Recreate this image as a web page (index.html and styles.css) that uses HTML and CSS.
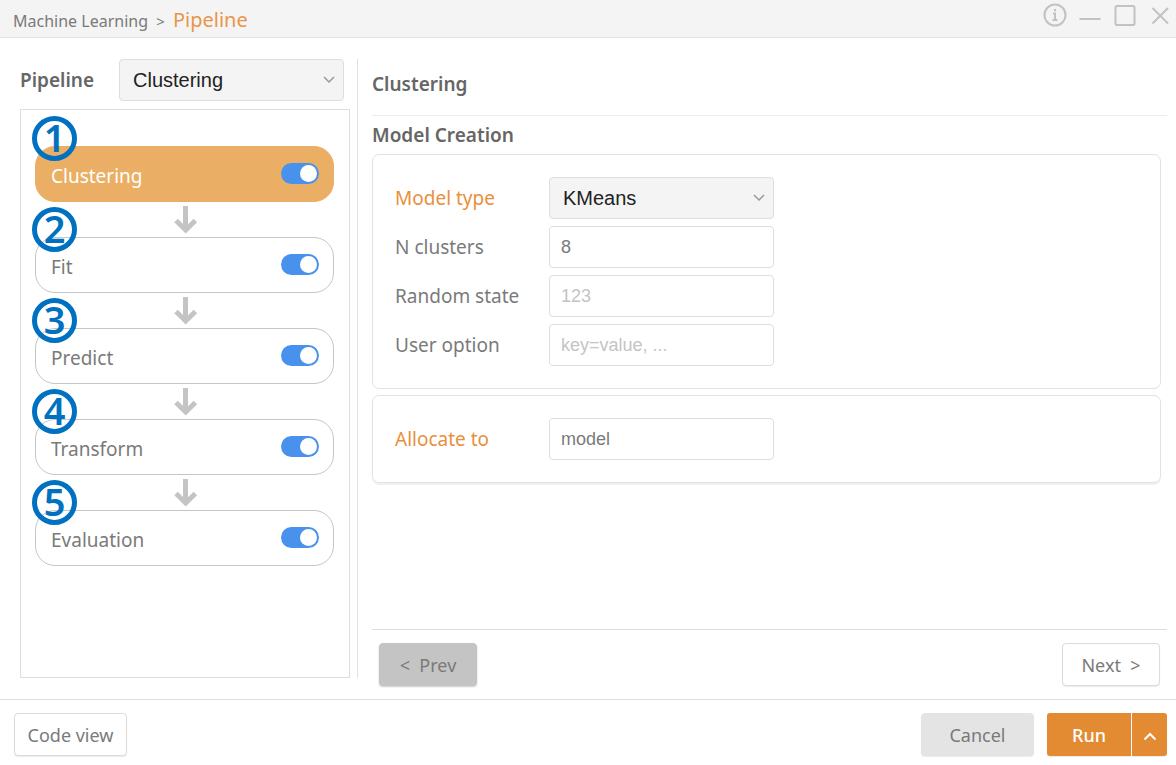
FILE: index.html
```html
<!DOCTYPE html>
<html lang="en">
<head>
<meta charset="utf-8">
<title>Machine Learning - Pipeline</title>
<link rel="stylesheet" href="styles.css">
</head>
<body>
<div class="window">
  <header class="titlebar">
    <h1 class="crumbs">Machine Learning <span class="crumb-sep">&gt;</span> <span class="crumb-current">Pipeline</span></h1>
    <div class="window-controls">
      <button class="icon-button" type="button" aria-label="Information">
        <svg width="24" height="24" viewBox="0 0 24 24"><circle cx="12" cy="12" r="10.5"/><path d="M10 10.5h2v6M9.500 17h5M12 6v2.200"/></svg>
      </button>
      <button class="icon-button" type="button" aria-label="Minimize">
        <svg width="24" height="24" viewBox="0 0 24 24"><path d="M1.500 16h21"/></svg>
      </button>
      <button class="icon-button" type="button" aria-label="Maximize">
        <svg width="24" height="24" viewBox="0 0 24 24"><rect x="2.500" y="3" width="19" height="19" rx="1.500"/></svg>
      </button>
      <button class="icon-button" type="button" aria-label="Close">
        <svg width="24" height="24" viewBox="0 0 24 24"><path d="M4.500 5L20 20.500M20 5L4.500 20.500"/></svg>
      </button>
    </div>
  </header>

  <main class="content">
    <section class="sidebar">
      <div class="template">
        <label class="template-label" for="template">Pipeline</label>
        <select class="field select" id="template"><option>Clustering</option></select>
      </div>
      <ol class="steps">
        <li class="step step-active"><span class="badge">1</span><label for="s1">Clustering</label><input class="toggle" type="checkbox" id="s1" checked></li>
        <li class="step"><span class="badge">2</span><label for="s2">Fit</label><input class="toggle" type="checkbox" id="s2" checked>
          <svg class="arrow" width="24" height="28" viewBox="0 0 24 28"><path d="M11.500 0v24M2 14.500l9.700 9.500 9.700-9.500"/></svg></li>
        <li class="step"><span class="badge">3</span><label for="s3">Predict</label><input class="toggle" type="checkbox" id="s3" checked>
          <svg class="arrow" width="24" height="28" viewBox="0 0 24 28"><path d="M11.500 0v24M2 14.500l9.700 9.500 9.700-9.500"/></svg></li>
        <li class="step"><span class="badge">4</span><label for="s4">Transform</label><input class="toggle" type="checkbox" id="s4" checked>
          <svg class="arrow" width="24" height="28" viewBox="0 0 24 28"><path d="M11.500 0v24M2 14.500l9.700 9.500 9.700-9.500"/></svg></li>
        <li class="step"><span class="badge">5</span><label for="s5">Evaluation</label><input class="toggle" type="checkbox" id="s5" checked>
          <svg class="arrow" width="24" height="28" viewBox="0 0 24 28"><path d="M11.500 0v24M2 14.500l9.700 9.500 9.700-9.500"/></svg></li>
      </ol>
    </section>

    <section class="detail">
      <h2 class="detail-title">Clustering</h2>
      <div class="detail-body">
        <h3 class="group-title">Model Creation</h3>
        <div class="card">
          <label class="required" for="type">Model type</label>
          <select class="field select" id="type"><option>KMeans</option></select>
          <label for="clusters">N clusters</label>
          <input class="field" id="clusters" type="text" value="8">
          <label for="state">Random state</label>
          <input class="field" id="state" type="text" placeholder="123">
          <label for="option">User option</label>
          <input class="field" id="option" type="text" placeholder="key=value, ...">
        </div>
        <div class="card card-last">
          <label class="required" for="allocate">Allocate to</label>
          <input class="field" id="allocate" type="text" value="model">
        </div>
      </div>
      <div class="pager">
        <button class="button button-prev" type="button">&lt;&nbsp; Prev</button>
        <button class="button button-next" type="button">Next&nbsp; &gt;</button>
      </div>
    </section>
  </main>

  <footer class="actions">
    <button class="button button-code" type="button">Code view</button>
    <button class="button button-cancel" type="button">Cancel</button>
    <div class="run-group">
      <button class="button button-run" type="button">Run</button>
      <button class="button button-more" type="button" aria-label="More run options">
        <svg width="14" height="10" viewBox="0 0 14 10"><path d="M1.500 7.500L7 2l5.500 5.500"/></svg>
      </button>
    </div>
  </footer>
</div>
</body>
</html>
```
FILE: styles.css
```css
* { box-sizing: border-box; }

body {
  margin: 0;
  color: #7a7a7a;
  background: #fff;
  font-family: "Noto Sans", "Open Sans", sans-serif;
  font-size: 19px;
  line-height: 26px;
}

h1, h2, h3 { margin: 0; }

button, input, select { font: inherit; color: inherit; }

.window {
  display: flex;
  flex-direction: column;
  min-height: 100vh;
}

.titlebar {
  display: flex;
  align-items: center;
  justify-content: space-between;
  height: 38px;
  padding: 0 4px 0 13px;
  background: #f4f4f4;
  border-bottom: 1px solid #e0e0e0;
}

.crumbs {
  padding-top: 4px;
  font-size: 16px;
  font-weight: 400;
}

.crumb-sep {
  margin: 0 4px;
  font-size: 15px;
}

.crumb-current {
  color: #e8964a;
  font-size: 20px;
}

.window-controls {
  display: flex;
  gap: 11px;
  padding-bottom: 7px;
}

.icon-button {
  display: flex;
  padding: 0;
  border: 0;
  background: none;
}

.icon-button svg {
  fill: none;
  stroke: #c2c2c2;
  stroke-width: 2;
}

.content {
  display: flex;
  flex: 1;
  gap: 14px;
  padding: 21px 9px 13px 20px;
}

.sidebar {
  display: flex;
  flex: 0 0 338px;
  flex-direction: column;
  gap: 8px;
  margin-bottom: 8px;
  padding-right: 7px;
  border-right: 1px solid #e2e2e2;
}

.template {
  display: flex;
  align-items: center;
  justify-content: space-between;
  padding-right: 6px;
}

.template-label {
  color: #666;
  font-weight: 600;
}

.field {
  width: 225px;
  height: 42px;
  padding: 0 11px;
  border: 1px solid #dedede;
  border-radius: 4px;
  background: #fff;
  font-family: "Liberation Sans", Arial, sans-serif;
  font-size: 18px;
}

.field::placeholder { color: #c4c4c4; opacity: 1; }

.select {
  padding: 0 13px;
  color: #222;
  font-size: 20px;
  appearance: none;
  background: #f4f4f4 url("data:image/svg+xml,%3Csvg xmlns='http://www.w3.org/2000/svg' width='12' height='8'%3E%3Cpath d='M1 1l5 5 5-5' fill='none' stroke='%23999' stroke-width='1.500'/%3E%3C/svg%3E") no-repeat right 8px center;
}

.steps {
  display: flex;
  flex: 1;
  flex-direction: column;
  gap: 35px;
  margin: 0;
  padding: 36px 15px 36px 14px;
  border: 1px solid #dedede;
  list-style: none;
}

.step {
  position: relative;
  display: flex;
  align-items: center;
  justify-content: space-between;
  height: 56px;
  padding: 4px 14px 0 15px;
  border: 1px solid #c6c6c6;
  border-radius: 20px;
}

.step-active {
  color: #fff;
  background: #eaaf64;
  border-color: #eaaf64;
}

.badge {
  position: absolute;
  top: -31px;
  left: -4px;
  width: 45px;
  height: 45px;
  border: 5px solid #0070c0;
  border-radius: 50%;
  color: #0070c0;
  font-size: 38px;
  font-weight: 600;
  line-height: 33px;
  text-align: center;
}

.arrow {
  position: absolute;
  top: -32px;
  left: 138px;
  fill: none;
  stroke: #c4c4c4;
  stroke-width: 5;
}

.toggle {
  display: flex;
  align-items: center;
  justify-content: flex-end;
  width: 38px;
  height: 21px;
  margin: 0 0 5px;
  padding: 0 2px;
  border-radius: 11px;
  background: #4892ed;
  appearance: none;
}

.toggle::before {
  width: 17px;
  height: 17px;
  border-radius: 50%;
  background: #fff;
  content: "";
}

.detail {
  display: flex;
  flex: 1;
  flex-direction: column;
}

.detail-title, .group-title {
  color: #666;
  font-size: 19px;
  font-weight: 600;
}

.detail-title {
  padding: 12px 0 18px;
  border-bottom: 1px solid #ededed;
}

.detail-body {
  flex: 1;
  padding: 6px 6px 0 0;
}

.card {
  display: grid;
  grid-template-columns: 154px 1fr;
  align-items: center;
  row-gap: 7px;
  margin-top: 6px;
  padding: 22px;
  border: 1px solid #e2e2e2;
  border-radius: 7px;
}

.card-last { box-shadow: 0 2px 1px #f0f0f0; }

.required { color: #e8903c; }

.pager {
  display: flex;
  justify-content: space-between;
  padding: 13px 7px 0;
  border-top: 1px solid #ddd;
}

.button {
  height: 43px;
  padding: 0;
  border: 1px solid #dcdcdc;
  border-radius: 4px;
  background: #fff;
  box-shadow: 0 1px 1px #ececec;
  font-size: 18px;
}

.button-prev, .button-next { width: 98px; }

.button-prev {
  border-color: #c4c4c4;
  background: #c4c4c4;
  box-shadow: 0 1px 2px #ccc;
}

.actions {
  display: flex;
  align-items: center;
  gap: 13px;
  height: 66px;
  padding: 4px 9px 0 14px;
  border-top: 1px solid #ddd;
}

.button-code {
  width: 113px;
  margin-right: auto;
}

.button-cancel {
  width: 113px;
  border-color: #e4e4e4;
  background: #e4e4e4;
}

.run-group { display: flex; gap: 1px; }

.button-run, .button-more {
  border: 0;
  color: #fff;
  background: #e38b32;
}

.button-run {
  width: 84px;
  border-radius: 3px 0 0 3px;
  font-weight: 500;
}

.button-more {
  width: 35px;
  border-radius: 0 3px 3px 0;
}

.button-more svg {
  fill: none;
  stroke: #fff;
  stroke-width: 2;
}
```
